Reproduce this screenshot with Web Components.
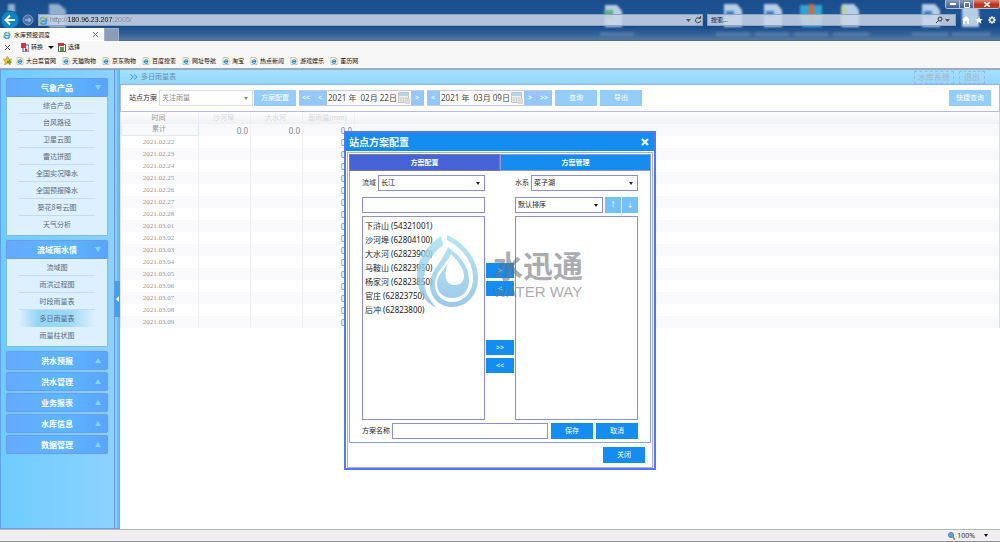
<!DOCTYPE html>
<html lang="zh-CN">
<head>
<meta charset="utf-8">
<title>水库预报调度</title>
<style>
  html, body { margin: 0; }
  body {
    min-height: 100vh;
    font: 7px/12px "Noto Sans", "Noto Sans CJK SC", sans-serif;
    color: #333;
    background: #fff;
  }
</style>
</head>
<body>
<reservoir-app></reservoir-app>

<script>
const base = `
  * { box-sizing: border-box; }
  button, input, select { font: inherit; color: inherit; margin: 0; padding: 0; border: 0; border-radius: 0; background: none; min-width: 0; }
  button { white-space: nowrap; cursor: pointer; }
  a { color: inherit; text-decoration: none; }
  svg { display: block; }
`;
const define = (name, render) => customElements.define(name, class extends HTMLElement {
  constructor() { super(); this.attachShadow({ mode: 'open' }); }
  connectedCallback() {
    const t = document.createElement('template');
    t.innerHTML = `<style>${base}</style>` + render(this);
    this.shadowRoot.replaceChildren(t.content.cloneNode(true));
  }
});

const ieIcon = (s) => `<svg width="${s}" height="${s}" viewBox="0 0 16 16" aria-hidden="true">
  <path d="M2 1h9l3 3v11H2z" fill="#fff" stroke="#9a9a8c"/>
  <path d="M12 9H4.600a3.600 3.600 0 0 0 6.800 1.700M4.600 8.500a3.700 3.700 0 0 1 7.300.5" fill="none" stroke="#2a8fe0" stroke-width="2.400"/>
  <path d="M2 12C3 7 8 3 14 3" fill="none" stroke="#dfc63a" stroke-width="1.500"/></svg>`;

const eIcon = (s) => `<svg width="${s}" height="${s}" viewBox="0 0 16 16" aria-hidden="true">
  <path d="M13.500 9H3a5 5 0 0 0 9.800 2M3 8a5 5 0 0 1 10.500 1" fill="none" stroke="#3aa0ea" stroke-width="3"/>
  <path d="M1 14C1 8 8 1 15 2" fill="none" stroke="#e8c23a" stroke-width="2"/></svg>`;

/* Browser frame: glass title area with address, search and tabs */
define('browser-frame', () => `
  <style>
    :host { display: block; position: relative; height: 41px; overflow: hidden; padding-top: 14px;
      background: linear-gradient(#1c4c8c 0, #1c5595 14px, #174a86 26px, #2b5b96 32px, #54789f 40px, #40608a 41px); }
    .desk { position: absolute; inset: 0 0 auto auto; filter: blur(1px); }
    .desk.l { right: auto; left: 0; }
    .nav { position: relative; display: flex; align-items: center; height: 12px; padding-right: 2px; }
    .back { width: 20px; height: 20px; margin: -4px 0; }
    .fwd { width: 16px; height: 12px; }
    .fwd svg { margin: auto; }
    .box { display: flex; align-items: center; height: 12px; background: rgba(203,213,230,.86); border: 1px solid #8da3c2; color: #444; }
    .addr { flex: 1; margin-left: 2px; }
    .addr input { flex: 1; height: 10px; margin-left: 2px; font: 7px/10px "Liberation Sans", sans-serif;
      color: #667; -webkit-text-fill-color: transparent;
      background: linear-gradient(90deg, #777c88 18px, #111 18px 63px, #858b98 63px); -webkit-background-clip: text; background-clip: text; }
    .addr button, .find button { width: 9px; height: 10px; }
    .find { width: 249px; margin: 0 3px 0 4px; padding: 0 3px; }
    .find input { flex: 1; font-size: 6px; height: 10px; color: #111; }
    .find input::placeholder { color: #111; opacity: 1; }
    .tool { width: 13px; height: 12px; }
    .tool svg, .find svg, .addr button svg { margin: auto; }
    .tabs { position: relative; display: flex; height: 13px; margin-top: 2px; }
    .tab { display: flex; align-items: center; width: 104px; padding: 0 3px; gap: 3px; background: #fdfdfe; font-size: 6px; color: #111; }
    .tab span { flex: 1; }
    .tab button { width: 8px; height: 10px; color: #777; }
    .new { width: 15px; background: #8a9db8; border: 1px solid #9fb0c8; border-bottom: 0; }
    .win { position: absolute; top: 0; right: 0; display: flex; height: 9px; width: 55px; border: 1px solid #b7c3d6; border-top: 0; border-radius: 0 0 3px 3px; overflow: hidden; }
    .win button { width: 14px; height: 9px; background: linear-gradient(#8a9cba, #3c5581); border-right: 1px solid #b7c3d6; }
    .win .x { flex: 1; background: linear-gradient(#d98b7a, #c0301c 50%, #b8442c); border: 0; }
    .win svg { margin: auto; }
  </style>
  <svg class="desk l" width="80" height="41" aria-hidden="true"><path d="M8 4h7v10H8zM49 4h10l7 6v18H49z" fill="#b9cfe0" opacity=".75"/></svg>
  <svg class="desk" width="400" height="41" aria-hidden="true">
    <g fill="#c8dcf0" opacity=".9"><path d="M5 5h12l5 6v16H5zM124 4h13l5 6v17h-18zM164 4h13l5 6v17h-18zM242 4h12l5 6v17h-17zM322 4h13l5 6v17h-18zM362 4h12l5 6v17h-17z"/></g>
    <path d="M4 10h9v8H4z" fill="#5fae86"/>
    <path d="M126 11h8v5h-8zM166 11h8v5h-8zM324 11h8v5h-8z" fill="#3f7fc0"/>
    <path d="M200 5h22v10h-22z" fill="#2fa5d8"/><path d="M200 15h22v6h-22z" fill="#88b968"/><path d="M202 20h20v7h-20z" fill="#45a8e0"/><path d="M209 4h5v17h-5z" fill="#d5683c"/>
    <path d="M241 6h5v20h-5z" fill="#bfd09a"/>
    <path d="M-4 34h38M116 34h34M155 34h34M194 34h34M233 34h36M312 34h36M352 34h38" stroke="#c9d4e2" stroke-width="4" opacity=".2"/>
  </svg>
  <div class="nav">
    <button class="back" aria-label="后退"><svg width="20" height="20" viewBox="0 0 20 20"><circle cx="10" cy="10" r="9" fill="#0b86c6" stroke="#0a5f98"/><path d="M15 10H6M10 5.500L5.500 10l4.500 4.500" fill="none" stroke="#fff" stroke-width="2"/></svg></button>
    <button class="fwd" aria-label="前进"><svg width="12" height="12" viewBox="0 0 12 12"><circle cx="6" cy="6" r="5" fill="#4a74ab" stroke="#7d9bc4"/><path d="M3 6h5.500M6.500 4l2 2-2 2" fill="none" stroke="#c9d8ec"/></svg></button>
    <div class="box addr">${eIcon(9)}<input aria-label="地址" value="http://180.96.23.207:2005/">
      <button aria-label="地址列表"><svg width="5" height="3"><path d="M0 0h5L2.500 3z" fill="#555"/></svg></button>
      <button aria-label="刷新"><svg width="8" height="8" viewBox="0 0 8 8"><path d="M6.500 4.500A2.500 2.500 0 1 1 5 2h1.500M6.500 0v2.500H4.500" fill="none" stroke="#444"/></svg></button></div>
    <div class="box find"><input aria-label="搜索" placeholder="搜索...">
      <button aria-label="开始搜索"><svg width="8" height="8" viewBox="0 0 8 8"><circle cx="5" cy="3" r="2" fill="none" stroke="#333"/><path d="M3.500 4.500L1 7" stroke="#333"/></svg></button>
      <button aria-label="搜索选项"><svg width="5" height="3"><path d="M0 0h5L2.500 3z" fill="#555"/></svg></button></div>
    <button class="tool" aria-label="主页"><svg width="8" height="8" viewBox="0 0 8 8"><path d="M4 0l4 4H7v4H5V5H3v3H1V4H0z" fill="#fff"/></svg></button>
    <button class="tool" aria-label="收藏"><svg width="8" height="8" viewBox="0 0 8 8"><path d="M4 0l1.100 2.900H8L5.700 4.800l.9 3L4 6 1.400 7.800l.9-3L0 2.900h2.900z" fill="#fff"/></svg></button>
    <button class="tool" aria-label="工具"><svg width="8" height="8" viewBox="0 0 8 8"><circle cx="4" cy="4" r="2.200" fill="none" stroke="#fff" stroke-width="1.500"/><path d="M4 0v1.500M4 6.500V8M0 4h1.500M6.500 4H8M1.200 1.200l1 1M5.800 5.800l1 1M6.800 1.200l-1 1M2.200 5.800l-1 1" stroke="#fff"/></svg></button>
  </div>
  <div class="tabs">
    <div class="tab">${eIcon(8)}<span>水库预报调度</span><button aria-label="关闭标签页"><svg width="5" height="5" viewBox="0 0 5 5"><path d="M0 0l5 5M5 0L0 5" stroke="#666"/></svg></button></div>
    <button class="new" aria-label="新建标签页"></button>
  </div>
  <div class="win">
    <button aria-label="最小化"><svg width="6" height="3"><path d="M0 0h6v2H0z" fill="#fff"/></svg></button>
    <button aria-label="还原"><svg width="6" height="6"><path d="M.5.500h5v5h-5z" fill="none" stroke="#fff"/></svg></button>
    <button class="x" aria-label="关闭"><svg width="6" height="5" viewBox="0 0 6 5"><path d="M0 0l6 5M6 0L0 5" stroke="#fff" stroke-width="1.500"/></svg></button>
  </div>`);

/* Add-on command bar and favourites bar */
define('favorites-bar', () => `
  <style>
    :host { display: block; background: #f7f7f7; border-bottom: 1px solid #a9a9b4; color: #111; font-size: 6px; height: 28px; }
    .cmd, nav { display: flex; align-items: center; }
    .cmd { height: 12px; padding-left: 5px; }
    .cmd button { display: flex; align-items: center; gap: 2px; height: 10px; }
    .conv { margin-left: 11px; } .more { margin: 0 4px 0 5px; }
    nav { height: 15px; padding-left: 3px; gap: 6px; }
    nav a { display: flex; align-items: center; gap: 2px; white-space: nowrap; }
    .star { margin-right: -2px; }
  </style>
  <div class="cmd">
    <button aria-label="关闭工具栏"><svg width="5" height="5" viewBox="0 0 5 5"><path d="M0 0l5 5M5 0L0 5" stroke="#555"/></svg></button>
    <button class="conv"><svg width="8" height="9" viewBox="0 0 8 9"><path d="M2 2h6v7H2z" fill="#dfe6f4" stroke="#445a9a"/><path d="M0 0h5v5H0z" fill="#d8324a"/><path d="M4 5l3 2-3 2z" fill="#c33"/></svg>转换</button>
    <button class="more" aria-label="转换选项"><svg width="6" height="3"><path d="M0 0h6L3 3z" fill="#111"/></svg></button>
    <button><svg width="8" height="9" viewBox="0 0 8 9"><path d="M.5 1.500h7v7h-7z" fill="#e9efe0" stroke="#5b6b4a"/><path d="M0 0h6v3H0z" fill="#c8323c"/><path d="M2 4h4v4H2z" fill="#5f9a52"/></svg>选择</button>
  </div>
  <nav aria-label="收藏夹栏">
    <a class="star" href="#" aria-label="添加到收藏夹"><svg width="9" height="9" viewBox="0 0 9 9"><path d="M4.500 0L6 3l3 .3-2.300 2.200L7.500 9l-3-1.800L1.500 9l.8-3.500L0 3.300 3 3z" fill="#f2b92c" stroke="#c98b14" stroke-width=".5"/><path d="M4 5h2V3.500L9 6 6 8.500V7H4z" fill="#4cae3e"/></svg></a>
    ${['大白菜官网', '天猫购物', '京东购物', '百度搜索', '网址导航', '淘宝', '热点新闻', '游戏娱乐', '董历网'].map(t => `<a href="#">${ieIcon(8)}${t}</a>`).join('')}
  </nav>`);

/* Sidebar group: title bar plus optional links */
define('menu-group', (el) => {
  const items = (el.getAttribute('items') || '').split(',').filter(Boolean);
  const open = items.length > 0;
  return `
  <style>
    :host { display: block; border-radius: 2px; }
    .head { display: grid; grid-template-columns: 1fr auto 1fr; align-items: center; width: 100%; height: 19px; color: #fff; font: bold 8px/12px "Noto Sans CJK SC", sans-serif;
      background: linear-gradient(90deg, #66a9ff, #5cb6ff 55%, #5ba4fb); border: 1px solid #699fe6; border-radius: 2px; box-shadow: 0 0 1px #8a96c8; }
    .head span { grid-column: 2; }
    .head svg { justify-self: end; margin-right: 6px; }
    ul { list-style: none; margin: 0; padding: 0 0 2px; background: #dcf0fe; border: 1px solid #86b8e4; border-top: 0; border-radius: 0 0 2px 2px; color: #5c6b78; font: 7px/16px "Noto Sans CJK SC", sans-serif; }
    li { text-align: center; height: 17px; margin: 0 12px; border-bottom: 1px solid #c3dcee; }
    li:last-child { border: 0; }
    li.on { background: linear-gradient(90deg, #dcf0fe, #94d4f6 25%, #9ad8f8 65%, #dcf0fe); border-color: transparent; }
    li a { display: block; }
  </style>
  <button class="head" aria-expanded="${open}"><span>${el.getAttribute('label')}</span>
    <svg width="6" height="5"><path d="${open ? 'M0 0h6L3 5z' : 'M0 5h6L3 0z'}" fill="#84d4f8"/></svg></button>
  ${open ? `<ul>${items.map(i => `<li class="${i === el.getAttribute('current') ? 'on' : ''}"><a href="#">${i}</a></li>`).join('')}</ul>` : ''}`;
});

define('side-menu', () => `
  <style>
    :host { display: flex; flex: none; width: 120px; background: linear-gradient(90deg, #6dcdff, #8ed2ff); border-top: 1px solid #7fa0dc; border-bottom: 1px solid #6f9be0; }
    nav { flex: 1; display: flex; flex-direction: column; gap: 2px; padding: 8px 6px 0 5px; border-left: 1px solid #5ea2e8; }
    .open { margin-bottom: 2px; }
    .split { width: 6px; display: flex; align-items: center; border-left: 1px solid #6c94dc; background: linear-gradient(90deg, #8fd4ff, #4db4fa); }
    .split button { width: 5px; height: 36px; background: #38a4f4; }
  </style>
  <nav aria-label="主菜单">
    <menu-group class="open" label="气象产品" items="综合产品,台风路径,卫星云图,雷达拼图,全国实况降水,全国预报降水,葵花8号云图,天气分析"></menu-group>
    <menu-group class="open" label="流域雨水情" current="多日雨量表" items="流域图,雨洪过程图,时段雨量表,多日雨量表,雨量柱状图"></menu-group>
    <menu-group label="洪水预报"></menu-group>
    <menu-group label="洪水管理"></menu-group>
    <menu-group label="业务报表"></menu-group>
    <menu-group label="水库信息"></menu-group>
    <menu-group label="数据管理"></menu-group>
  </nav>
  <div class="split"><button aria-label="收起菜单"><svg width="4" height="6"><path d="M4 0v6L1 3z" fill="#fff"/></svg></button></div>`);

/* Drop-down with its label */
define('pick-list', (el) => `
  <style>
    :host { display: flex; align-items: center; height: 16px; --line: #8c8fd0; --ink: #222; }
    :host([faded]) { --line: #dcdcee; --ink: #8a8a8a; }
    label { flex: none; white-space: nowrap; margin-right: 2px; color: #333; }
    .wrap { flex: 1; display: grid; align-items: center; border: 1px solid var(--line); background: #fff; color: var(--ink); }
    select { grid-area: 1 / 1; appearance: none; width: 100%; height: 14px; padding: 0 2px; }
    svg { grid-area: 1 / 1; justify-self: end; margin-right: 4px; pointer-events: none; }
  </style>
  ${el.getAttribute('label') ? `<label for="s">${el.getAttribute('label')}</label>` : ''}
  <div class="wrap"><select id="s" aria-label="${el.getAttribute('label') || el.getAttribute('hint')}"><option>${el.getAttribute('value')}</option></select>
  <svg width="4" height="3"><path d="M0 0h4L2 3z" fill="currentColor"/></svg></div>`);

define('push-button', () => `
  <style>
    :host { display: flex; flex: none; width: 42px; height: 16px; --fill: #148cf0; }
    :host([faded]) { --fill: #94cdf8; }
    :host([narrow]) { width: 16px; --fill: #74c0fa; }
    :host([move]) { width: 28px; height: 15px; }
    button { flex: 1; line-height: 12px; background: var(--fill); color: #fff; }
  </style>
  <button><slot></slot></button>`);

define('date-stepper', (el) => {
  const far = el.getAttribute('far');
  return `
  <style>
    :host { display: flex; height: 16px; border-top: 1px solid #c6c8ee; border-bottom: 1px solid #c6c8ee; }
    button { width: 13px; background: #94c8f8; color: #fff; border-right: 1px solid #a9b8f0; line-height: 10px; }
    button.far { width: 15px; }
    input { width: 71px; padding-left: 1px; font-size: 8px; color: #444; white-space: pre; }
    button.cal { background: #fff; border: 0; }
  </style>
  ${far === 'start' ? '<button class="far">&lt;&lt;</button>' : ''}<button>&lt;</button><input aria-label="${el.getAttribute('label')}" value="${el.getAttribute('value')}"><button class="cal" aria-label="打开日历"><svg width="12" height="12" viewBox="0 0 12 12"><path d="M.5.500h10v10H.5z" fill="#f2f2f2" stroke="#c4c4c4"/><path d="M1 1h9v3H1z" fill="#b8d4ec"/><path d="M3 5v5M5.500 5v5M8 5v5M1 6h9M1 8h9" stroke="#c8c8c8" stroke-width=".7"/><path d="M7 6h5v6H7z" fill="#dfd8cc"/></svg></button><button>&gt;</button>${far === 'end' ? '<button class="far">&gt;&gt;</button>' : ''}`;
});

define('query-toolbar', () => `
  <style>
    :host { display: block; }
    .crumb { display: flex; align-items: center; height: 16px; padding: 0 15px 0 10px; background: linear-gradient(#a6e0ff, #92d6fe); border-top: 1px solid #86aede; border-bottom: 1px solid #8cb4e4; color: #6a8fae; }
    .crumb svg { margin-right: 3px; }
    .crumb span { flex: 1; }
    .crumb button { height: 13px; padding: 0 3px; border: 1px dashed #9db4ee; color: #a9b3c0; font: 8px/10px "Noto Sans CJK SC", sans-serif; }
    .crumb button + button { margin-left: 5px; padding: 0 4px; }
    form { display: flex; align-items: center; height: 27px; padding: 0 8px; border: 1px solid #b9b9e8; border-top: 0; background: #fff; }
    .plan { width: 124px; margin-right: 1px; }
    .end { margin-left: auto; }
    .g { margin-left: 3px; }
  </style>
  <div class="crumb"><svg width="8" height="6" viewBox="0 0 8 6"><path d="M.5.500L3.500 3 .5 5.500M4 .5L7 3 4 5.500" fill="none" stroke="#4a8fd0"/></svg><span>多日雨量表</span><button>水库系统</button><button>退出</button></div>
  <form onsubmit="return false">
    <pick-list class="plan" faded label="站点方案" value="关注雨量"></pick-list>
    <push-button faded>方案配置</push-button>
    <date-stepper class="g" far="start" label="开始日期" value="2021 年  02月 22日"></date-stepper>
    <date-stepper class="g" far="end" label="结束日期" value="2021 年  03月 09日"></date-stepper>
    <push-button class="g" faded>查询</push-button>
    <push-button class="g" faded>导出</push-button>
    <push-button class="end" faded>快捷查询</push-button>
  </form>`);

define('rain-table', () => {
  const days = ['02.22', '02.23', '02.24', '02.25', '02.26', '02.27', '02.28', '03.01', '03.02', '03.03', '03.04', '03.05', '03.06', '03.07', '03.08', '03.09'];
  return `
  <style>
    :host { display: block; border-left: 1px solid #e4e4f2; border-right: 1px solid #dcdce8; }
    table { width: 100%; table-layout: fixed; border-collapse: separate; border-spacing: 0; }
    col.t { width: 78px; } col.n { width: 52px; }
    th, td { height: 12px; padding: 0 2px 0 0; font-weight: normal; line-height: 11px; overflow: hidden; border-right: 1px solid #f0f0f4; }
    th:last-child, td:last-child { border-right: 0; }
    thead th { background: linear-gradient(#fdfdfd, #f1f2f4); color: #d6d6da; text-align: center; border-bottom: 1px solid #eef0f2; }
    thead th:first-child, tbody tr:first-child th { color: #999; }
    tbody th { color: #999; text-align: center; font: 7px/11px "Liberation Serif", "Noto Sans CJK SC", serif; }
    tbody tr:first-child th { border: 1px solid #dfeaf6; border-top: 0; }
    td { text-align: right; font-size: 8px; color: #888; }
    tbody tr:nth-child(odd) { background: #f9f9fc; }
  </style>
  <table>
    <colgroup><col class="t"><col class="n"><col class="n"><col class="n"><col></colgroup>
    <thead><tr><th scope="col">时间</th><th scope="col">沙河埠</th><th scope="col">大水河</th><th scope="col">面雨量(mm)</th><th></th></tr></thead>
    <tbody>
      <tr><th scope="row">累计</th><td>0.0</td><td>0.0</td><td>0.0</td><td></td></tr>
      ${days.map(d => `<tr><th scope="row">2021.${d}</th><td></td><td></td><td>0.0</td><td></td></tr>`).join('')}
    </tbody>
  </table>`;
});

define('plan-dialog', () => `
  <style>
    :host { display: block; width: 312px; color: #222; }
    dialog { position: static; display: block; width: auto; margin: 0; padding: 0; color: inherit; background: #fff; border: 2px solid #5677ee; }
    header { display: flex; align-items: center; justify-content: space-between; height: 18px; padding: 0 5px 0 3px; background: #148cf0; color: #fff; }
    h2 { margin: 0; font-size: 10px; line-height: 16px; }
    .body { margin: 1px 1px 0; border: 1px solid #9fb2ec; padding: 1px 1px 0; }
    .tabs { display: grid; grid-template-columns: 1fr 1fr; height: 17px; }
    .tabs button { background: #148cf0; color: #fff; font-weight: bold; border: 1px solid #8c9bd8; }
    .tabs button[aria-selected=true] { background: #4664d8; border-color: #807a90; }
    .panel { display: grid; grid-template-columns: 1fr 30px 1fr; padding: 4px 12px 3px; border: 1px solid #8f9fe0; border-top: 0; row-gap: 3px; }
    .c3 { grid-column: 3; }
    .top { margin-bottom: 3px; }
    .box { height: 16px; padding: 0 3px; border: 1px solid #8c8fd0; background: #fff; width: 100%; }
    .sort { display: flex; gap: 1px; }
    .sort pick-list { flex: 1; margin-right: 1px; }
    .list { width: 100%; height: 204px; padding: 3px 0; border: 1px solid #8c8fd0; overflow: hidden; font-size: 8px; appearance: none; outline: 0; }
    option { display: block; height: 14px; line-height: 14px; min-height: 0; padding: 0 2px; }
    .move { display: flex; flex-direction: column; align-items: center; gap: 3px; padding-top: 47px; }
    .all { margin-top: 41px; }
    .save { grid-column: 1 / -1; display: flex; align-items: center; }
    .save label { margin-right: 2px; }
    .save input { flex: 1; }
    .save push-button { margin-left: 3px; }
    footer { display: flex; justify-content: flex-end; padding: 4px 6px; }
  </style>
  <dialog open aria-labelledby="t">
    <header><h2 id="t">站点方案配置</h2><button aria-label="关闭窗口"><svg width="8" height="8" viewBox="0 0 8 8"><path d="M1 1l6 6M7 1L1 7" stroke="#fff" stroke-width="2"/></svg></button></header>
    <div class="body">
      <div class="tabs" role="tablist"><button role="tab" aria-selected="true">方案配置</button><button role="tab" aria-selected="false">方案管理</button></div>
      <div class="panel">
        <pick-list class="top" label="流域" value="长江"></pick-list>
        <pick-list class="top c3" label="水系" value="菜子湖"></pick-list>
        <input class="box" aria-label="站点筛选">
        <div class="sort c3"><pick-list hint="排序方式" value="默认排序"></pick-list><push-button narrow>↑</push-button><push-button narrow>↓</push-button></div>
        <select class="list" multiple aria-label="可选站点">
          <option>下浒山 (54321001)</option><option>沙河埠 (62804100)</option><option>大水河 (62823900)</option><option>马鞍山 (62823950)</option><option>杨家河 (62823850)</option><option>官庄 (62823750)</option><option>后冲 (62823800)</option>
        </select>
        <div class="move"><push-button move>&gt;</push-button><push-button move>&lt;</push-button><push-button class="all" move>&gt;&gt;</push-button><push-button move>&lt;&lt;</push-button></div>
        <select class="list" multiple aria-label="已选站点"></select>
        <div class="save"><label for="n">方案名称</label><input class="box" id="n"><push-button>保存</push-button><push-button>取消</push-button></div>
      </div>
      <footer><push-button>关闭</push-button></footer>
    </div>
  </dialog>`);

define('water-mark', () => `
  <style>
    :host { display: flex; align-items: center; gap: 14px; pointer-events: none; }
    div { display: grid; color: rgba(112,116,124,.6); font: bold 30px/30px "Noto Sans CJK SC", sans-serif; row-gap: 5px; padding-top: 4px; }
    small { font: 15px/16px "Liberation Sans", sans-serif; }
  </style>
  <svg width="62" height="74" viewBox="0 0 62 74" aria-hidden="true">
    <defs><linearGradient id="g" x1="0" y1="0" x2="0" y2="1"><stop offset="0" stop-color="#a4e2ee"/><stop offset="1" stop-color="#86bce6"/></linearGradient></defs>
    <g fill="url(#g)" opacity=".8">
      <path d="M24 1C9 11 0 25 0 40c0 16 8 28 20 33C12 65 7 56 7 45 7 29 16 18 26 10z"/>
      <path fill-rule="evenodd" d="M30 0c18 8 31 25 31 43 0 17-11 29-26 29-13 0-22-10-22-22 0-15 12-22 18-38 12 9 21 19 21 34 0 10-7 17-17 17-9 0-15-6-15-14 0-8 6-13 11-21-4 10-4 22 7 22 6 0 9-4 9-9 0-7-5-14-13-22-5 11-16 17-16 31 0 9 7 17 17 17 13 0 21-11 21-24C56 26 45 13 30 5z"/>
    </g>
  </svg>
  <div>水迅通<small>WATER WAY</small></div>`);

define('status-bar', () => `
  <style>
    :host { display: flex; align-items: center; justify-content: flex-end; height: 13px; padding-right: 12px; background: #f0eeee; border-top: 1px solid #b4bac2; border-bottom: 1px solid #8c8f98; color: #333; }
    button { display: flex; align-items: center; height: 10px; }
    .z { gap: 2px; margin-right: 9px; }
  </style>
  <button class="z"><svg width="7" height="8" viewBox="0 0 7 8"><circle cx="3" cy="3" r="2.500" fill="#5aa6e6" stroke="#4a80b8"/><path d="M5 5l2 3" stroke="#8a7a60" stroke-width="1.500"/></svg>100%</button>
  <button aria-label="缩放级别"><svg width="4" height="3"><path d="M0 0h4L2 3z" fill="#111"/></svg></button>`);

define('reservoir-app', () => `
  <style>
    :host { display: flex; flex-direction: column; min-height: 100vh; position: relative; }
    .main { flex: 1; display: flex; }
    .work { flex: 1; min-width: 0; background: #fff; }
    .over { position: absolute; left: 0; right: 0; top: 131px; display: flex; justify-content: center; }
    .mark { top: 235px; pointer-events: none; }
  </style>
  <browser-frame></browser-frame>
  <favorites-bar></favorites-bar>
  <div class="main"><side-menu></side-menu><main class="work"><query-toolbar></query-toolbar><rain-table></rain-table></main></div>
  <status-bar></status-bar>
  <div class="over"><plan-dialog></plan-dialog></div>
  <div class="over mark"><water-mark></water-mark></div>`);
</script>
</body>
</html>
